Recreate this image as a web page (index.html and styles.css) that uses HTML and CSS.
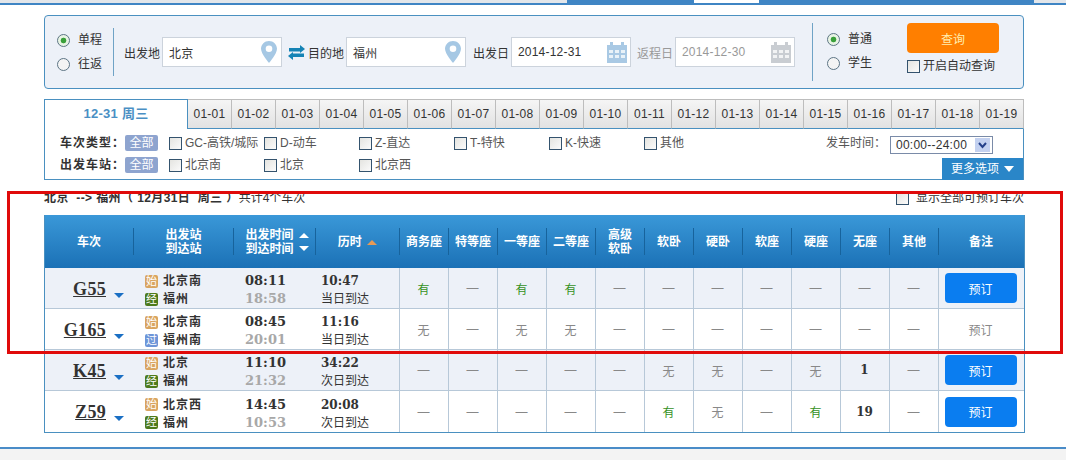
FILE: index.html
```html
<!DOCTYPE html>
<html lang="zh-CN">
<head>
    <meta charset="UTF-8" />
    <title>车票预订</title>
    <link rel="stylesheet" href="styles.css">
</head>
<body>
    <svg class="defs" width="0" height="0">
        <symbol id="pin" viewBox="0 0 16 22">
            <path d="M8 0C3.6 0 0 3.5 0 7.8 0 13 8 22 8 22s8-9 8-14.2C16 3.5 12.4 0 8 0zm0 11a3.3 3.3 0 1 1 0-6.6A3.3 3.3 0 0 1 8 11z" fill="#a6c8e4"/>
        </symbol>
        <symbol id="cal" viewBox="0 0 20 21">
            <path d="M0 3h3V0h3v3h8V0h3v3h3v18H0z" fill="currentColor"/>
            <path d="M2 8h4v3H2zm6 0h4v3H8zm6 0h4v3h-4zM2 13h4v3H2zm6 0h4v3H8zm6 0h4v3h-4z" fill="#fff" opacity=".75"/>
        </symbol>
    </svg>

    <div class="topbar">
        <div class="top-left"></div>
        <div class="top-nav"><div class="top-current"></div></div>
    </div>

    <div class="wrap">
        <form class="query">
            <div class="radios first">
                <label class="radio"><input type="radio" name="way" checked>单程</label>
                <label class="radio"><input type="radio" name="way">往返</label>
            </div>
            <span class="lbl">出发地</span>
            <div class="field"><input type="text" value="北京"><svg class="pin"><use href="#pin"/></svg></div>
            <svg class="swap" viewBox="0 0 17 15">
                <path d="M1 6.5V3h11V0l5 4-5 4V6.5zM16 8.5V12H5v3l-5-4 5-4v1.5z" fill="#1583b5"/>
            </svg>
            <span class="lbl">目的地</span>
            <div class="field"><input type="text" value="福州"><svg class="pin"><use href="#pin"/></svg></div>
            <span class="lbl lbl-go">出发日</span>
            <div class="field"><input type="text" value="2014-12-31"><svg class="cal"><use href="#cal"/></svg></div>
            <span class="lbl lbl-back">返程日</span>
            <div class="field off"><input type="text" value="2014-12-30"><svg class="cal"><use href="#cal"/></svg></div>
            <div class="radios second">
                <label class="radio"><input type="radio" name="who" checked>普通</label>
                <label class="radio"><input type="radio" name="who">学生</label>
            </div>
            <div class="actions">
                <button type="button" class="btn-query">查询</button>
                <label class="check"><input type="checkbox">开启自动查询</label>
            </div>
        </form>

        <ul class="tabs">
            <li class="active">12-31 周三</li>
            <li>01-01</li><li>01-02</li><li>01-03</li><li>01-04</li><li>01-05</li>
            <li>01-06</li><li>01-07</li><li>01-08</li><li>01-09</li><li>01-10</li>
            <li>01-11</li><li>01-12</li><li>01-13</li><li>01-14</li><li>01-15</li>
            <li>01-16</li><li>01-17</li><li>01-18</li><li>01-19</li>
        </ul>

        <div class="filter">
            <div class="filter-row">
                <b class="filter-name">车次类型：</b>
                <span class="all">全部</span>
                <label class="check item"><input type="checkbox">GC-高铁/城际</label>
                <label class="check item"><input type="checkbox">D-动车</label>
                <label class="check item"><input type="checkbox">Z-直达</label>
                <label class="check item"><input type="checkbox">T-特快</label>
                <label class="check item"><input type="checkbox">K-快速</label>
                <label class="check item"><input type="checkbox">其他</label>
                <span class="time-name">发车时间：</span>
                <div class="time-select">00:00--24:00<span class="time-arrow"><svg width="9" height="7" viewBox="0 0 9 7"><path d="M1 1l3.5 4L8 1" fill="none" stroke="#24408a" stroke-width="2"/></svg></span></div>
            </div>
            <div class="filter-row">
                <b class="filter-name">出发车站：</b>
                <span class="all">全部</span>
                <label class="check item"><input type="checkbox">北京南</label>
                <label class="check item"><input type="checkbox">北京</label>
                <label class="check item"><input type="checkbox">北京西</label>
                <div class="more">更多选项<i class="more-arrow"></i></div>
            </div>
        </div>

        <div class="summary">
            <div><b>北京&nbsp; --&gt; 福州（ 12月31日&nbsp; 周三 ）</b>共计4个车次</div>
            <label class="check"><input type="checkbox">显示全部可预订车次</label>
        </div>

        <table class="trains">
            <colgroup>
                <col class="c-no"><col class="c-st"><col class="c-tm"><col class="c-du">
                <col class="c-s"><col class="c-s"><col class="c-s"><col class="c-s">
                <col class="c-s"><col class="c-s"><col class="c-s"><col class="c-s">
                <col class="c-s"><col class="c-s"><col class="c-s"><col class="c-last">
            </colgroup>
            <thead>
                <tr>
                    <th>车次</th>
                    <th>出发站<br>到达站</th>
                    <th><div class="sort-wrap"><span>出发时间<br>到达时间</span><span class="sort-icons"><i class="up"></i><i class="down"></i></span></div></th>
                    <th>历时 <i class="up hot"></i></th>
                    <th>商务座</th><th>特等座</th><th>一等座</th><th>二等座</th>
                    <th>高级<br>软卧</th><th>软卧</th><th>硬卧</th><th>软座</th>
                    <th>硬座</th><th>无座</th><th>其他</th><th class="end">备注</th>
                </tr>
            </thead>
            <tbody>
                <tr>
                    <td class="no"><a>G55</a><i class="drop"></i></td>
                    <td class="st"><div><em class="tag start">始</em>北京南</div><div><em class="tag pass">经</em>福州</div></td>
                    <td class="tm"><b>08:11</b><b class="arr">18:58</b></td>
                    <td class="du"><b>10:47</b><span>当日到达</span></td>
                    <td class="yes">有</td><td>—</td><td class="yes">有</td><td class="yes">有</td>
                    <td>—</td><td>—</td><td>—</td><td>—</td><td>—</td><td>—</td><td>—</td>
                    <td class="end"><button type="button" class="book">预订</button></td>
                </tr>
                <tr>
                    <td class="no"><a>G165</a><i class="drop"></i></td>
                    <td class="st"><div><em class="tag start">始</em>北京南</div><div><em class="tag via">过</em>福州南</div></td>
                    <td class="tm"><b>08:45</b><b class="arr">20:01</b></td>
                    <td class="du"><b>11:16</b><span>当日到达</span></td>
                    <td>无</td><td>—</td><td>无</td><td>无</td>
                    <td>—</td><td>—</td><td>—</td><td>—</td><td>—</td><td>—</td><td>—</td>
                    <td class="end">预订</td>
                </tr>
                <tr>
                    <td class="no"><a>K45</a><i class="drop"></i></td>
                    <td class="st"><div><em class="tag start">始</em>北京</div><div><em class="tag pass">经</em>福州</div></td>
                    <td class="tm"><b>11:10</b><b class="arr">21:32</b></td>
                    <td class="du"><b>34:22</b><span>次日到达</span></td>
                    <td>—</td><td>—</td><td>—</td><td>—</td><td>—</td>
                    <td>无</td><td>无</td><td>—</td><td>无</td><td class="num">1</td><td>—</td>
                    <td class="end"><button type="button" class="book">预订</button></td>
                </tr>
                <tr>
                    <td class="no"><a>Z59</a><i class="drop"></i></td>
                    <td class="st"><div><em class="tag start">始</em>北京西</div><div><em class="tag pass">经</em>福州</div></td>
                    <td class="tm"><b>14:45</b><b class="arr">10:53</b></td>
                    <td class="du"><b>20:08</b><span>次日到达</span></td>
                    <td>—</td><td>—</td><td>—</td><td>—</td><td>—</td>
                    <td class="yes">有</td><td>无</td><td>—</td><td class="yes">有</td><td class="num">19</td><td>—</td>
                    <td class="end"><button type="button" class="book">预订</button></td>
                </tr>
            </tbody>
        </table>
    </div>

    <div class="footer"></div>

    <div class="highlight"></div>
</body>
</html>
```

FILE: styles.css
```css
* {
    box-sizing: border-box;
}
html, body {
    height: 460px;
    overflow: hidden;
}
body {
    margin: 0;
    background: #fff;
    color: #333;
    font-family: "Liberation Sans", "Noto Sans CJK SC", sans-serif;
    font-size: 12px;
}
.defs {
    position: absolute;
}
input[type="radio"],
input[type="checkbox"] {
    appearance: none;
    margin: 0;
    flex: none;
}

/* top strip */
.topbar {
    display: flex;
    height: 5px;
    border-bottom: 2px solid #3f85c4;
    background: #e3e6ea;
}
.top-left {
    width: 567px;
}
.top-nav {
    width: 467px;
    background: #3f85c4;
    padding-left: 127px;
}
.top-current {
    width: 65px;
    height: 3px;
    background: #fff;
}

.wrap {
    width: 980px;
    margin-left: 44px;
}

/* query box */
.query {
    display: flex;
    align-items: center;
    height: 74px;
    margin-top: 10px;
    border: 1px solid #4a90c0;
    border-radius: 4px;
    background: #edf1f8;
}
.radios {
    display: flex;
    flex-direction: column;
    justify-content: center;
    gap: 7px;
}
.radios.first {
    width: 69px;
    height: 48px;
    margin-right: 10px;
    padding-left: 12px;
    border-right: 1px solid #6fa3c6;
}
.radios.second {
    width: 95px;
    height: 58px;
    margin-left: 17px;
    padding: 0 0 2px 14px;
    border-left: 1px solid #6fa3c6;
}
.radio {
    display: flex;
    align-items: center;
    gap: 8px;
    height: 17px;
    line-height: 15px;
}
.radio input {
    width: 13px;
    height: 13px;
    border: 1px solid #5d7585;
    border-radius: 50%;
    background: #f4f4f4;
}
.radio input:checked {
    background: radial-gradient(circle, #3aa03a 0 2.5px, #e8f4e4 3.2px);
}
.lbl {
    width: 38px;
    flex: none;
}
.lbl.lbl-go {
    margin-left: 7px;
}
.lbl.lbl-back {
    margin-left: 6px;
    color: #999;
}
.field {
    display: flex;
    align-items: center;
    justify-content: space-between;
    width: 120px;
    height: 30px;
    flex: none;
    padding-right: 4px;
    border: 1px solid #ccd3dc;
    background: #fff;
    color: #a9c9e4;
}
.field input {
    width: 88px;
    min-width: 0;
    border: 0;
    outline: 0;
    padding: 0 0 0 6px;
    background: none;
    color: #333;
    font: inherit;
    letter-spacing: 0.2px;
}
.field.off {
    color: #c9cdd2;
}
.field.off input {
    color: #999;
}
.pin {
    width: 16px;
    height: 22px;
}
.cal {
    width: 20px;
    height: 21px;
    margin-right: -1px;
}
.swap {
    width: 17px;
    height: 15px;
    flex: none;
    margin: 0 3px 0 6px;
}
.actions {
    display: flex;
    flex-direction: column;
    align-self: flex-start;
    margin-top: 7px;
    gap: 7px;
}
.btn-query {
    width: 92px;
    height: 30px;
    border: 0;
    border-radius: 4px;
    background: #ff7f00;
    color: #ffeeb0;
    font: inherit;
}
.check {
    display: flex;
    align-items: center;
    gap: 3px;
    height: 13px;
    line-height: 13px;
}
.check input {
    width: 13px;
    height: 13px;
    border: 1px solid #34536e;
    background: linear-gradient(135deg, #e4e4e0, #fbfbfb);
}

/* date tabs */
.tabs {
    display: flex;
    height: 30px;
    margin: 10px 0 0;
    padding: 0;
    list-style: none;
}
.tabs li {
    width: 44px;
    height: 30px;
    border: 1px solid #bdbdbd;
    border-left: 0;
    border-bottom: 1px solid #4a90c0;
    background: linear-gradient(#f5f5f5, #e2e2e2);
    text-align: center;
    line-height: 28px;
    letter-spacing: 0.25px;
}
.tabs li.active {
    width: 144px;
    border: 1px solid #4a90c0;
    border-bottom: 0;
    background: #fff;
    color: #4a8fc4;
    font-size: 13px;
    font-weight: bold;
    line-height: 27px;
}

/* filters */
.filter {
    height: 51px;
    padding-top: 3px;
    border: 1px solid #4a90c0;
    border-top: 0;
}
.filter-row {
    display: flex;
    align-items: flex-start;
    height: 22px;
    padding-left: 15px;
    line-height: 22px;
    color: #555;
}
.filter-row + .filter-row {
    height: 25px;
}
.filter-name {
    width: 65px;
    color: #333;
    letter-spacing: 1px;
    white-space: nowrap;
}
.all {
    width: 33px;
    height: 16px;
    margin: 3px 11px 0 0;
    border-radius: 2px;
    background: #8ea4cf;
    color: #fff;
    text-align: center;
    line-height: 16px;
}
.item {
    width: 95px;
    height: 22px;
}
.time-name {
    margin-left: auto;
    margin-right: 4px;
}
.time-select {
    display: flex;
    align-items: center;
    justify-content: space-between;
    width: 103px;
    height: 18px;
    margin: 4px 30px 0 0;
    padding: 0 2px 0 5px;
    border: 1px solid #7a8ba8;
    background: #fff;
    color: #333;
    line-height: 16px;
    letter-spacing: 0.25px;
}
.time-arrow {
    display: flex;
    align-items: center;
    justify-content: center;
    width: 15px;
    height: 14px;
    background: #c3d1f0;
}
.more {
    display: flex;
    align-items: center;
    justify-content: center;
    gap: 5px;
    width: 81px;
    height: 22px;
    margin-left: auto;
    margin-top: 4px;
    background: #2a86c8;
    color: #fff;
}
.more-arrow {
    border: 5px solid transparent;
    border-top: 6px solid #fff;
    border-bottom: 0;
}

/* result summary */
.summary {
    display: flex;
    justify-content: space-between;
    align-items: center;
    height: 16px;
    margin-top: 10px;
    line-height: 16px;
}
.summary b {
    letter-spacing: 0.4px;
}
.summary .check {
    gap: 7px;
}

/* train table */
.trains {
    width: 980px;
    margin-top: 9px;
    table-layout: fixed;
    border-collapse: separate;
    border-spacing: 0;
    border: 1px solid #4a90c0;
    border-top: 0;
}
.c-no { width: 89px; }
.c-st { width: 100px; }
.c-tm { width: 82px; }
.c-du { width: 84px; }
.c-s { width: 49px; }
.c-last { width: 85px; }
.trains thead tr {
    background: linear-gradient(#3a98d8, #1b71b6);
}
.trains th {
    height: 53px;
    padding: 0 1px 0 0;
    color: #fff;
    line-height: 14px;
    background: linear-gradient(#17639c, #17639c) right center / 1px 27px no-repeat;
}
.trains th.end {
    background: none;
}
.sort-wrap {
    display: flex;
    align-items: center;
    justify-content: center;
    gap: 5px;
    padding-left: 5px;
}
.sort-icons {
    display: flex;
    flex-direction: column;
    gap: 8px;
}
.up, .down {
    display: inline-block;
    border: 5px solid transparent;
}
.up {
    border-top: 0;
    border-bottom: 5px solid #fff;
}
.down {
    border-bottom: 0;
    border-top: 5px solid #fff;
}
.up.hot {
    margin-left: 2px;
    border-bottom-color: #e79a55;
    vertical-align: 1px;
}
.trains td {
    height: 41px;
    padding: 0 1px 0 0;
    border-right: 1px solid #b7c8d8;
    border-bottom: 1px solid #b7c8d8;
    color: #888;
    text-align: center;
}
.trains tbody tr:nth-child(odd) td {
    background: #edf1f8;
}
.trains tbody tr:last-child td {
    border-bottom: 0;
}
.trains td.end {
    border-right: 0;
    padding-right: 2px;
}
.trains td.no, .trains td.st, .trains td.tm {
    border-right: 0;
}
.trains td.yes {
    color: #35911d;
}
.trains td.num {
    color: #333;
    font-family: "DejaVu Serif", serif;
    font-size: 12px;
    font-weight: bold;
}
.trains td.no {
    padding-top: 2px;
    text-align: left;
}
.no a {
    display: inline-block;
    width: 61px;
    color: #333;
    font-family: "Liberation Serif", serif;
    font-size: 18px;
    font-weight: bold;
    letter-spacing: 0.3px;
    text-align: right;
    text-decoration: underline;
}
.drop {
    display: inline-block;
    margin-left: 8px;
    border: 5px solid transparent;
    border-top: 5px solid #1a6fc4;
    border-bottom: 0;
    vertical-align: -3px;
}
.trains td.st {
    padding: 4px 0 0 11px;
    color: #333;
    font-weight: bold;
    letter-spacing: 1px;
    text-align: left;
    line-height: 18px;
}
.st div {
    display: flex;
    align-items: center;
}
.tag {
    width: 13px;
    height: 13px;
    margin-right: 5px;
    border-radius: 2px;
    color: #fff;
    font-size: 11px;
    font-style: normal;
    font-weight: normal;
    letter-spacing: 0;
    line-height: 13px;
    text-align: center;
}
.tag.start { background: #d9a45f; }
.tag.pass { background: #4d7a1c; }
.tag.via { background: #6d95d8; }
.trains td.tm, .trains td.du {
    padding-top: 4px;
    text-align: left;
}
.trains td.tm {
    padding-left: 11px;
}
.tm b, .du b, .du span {
    display: block;
    line-height: 18px;
    color: #333;
}
.tm b {
    font-family: "DejaVu Serif", serif;
    font-size: 13px;
}
.tm b.arr {
    color: #a8a8a8;
}
.trains td.du {
    padding-left: 5px;
}
.du b {
    font-family: "DejaVu Serif", serif;
    font-size: 12px;
}
.book {
    width: 72px;
    height: 30px;
    border: 0;
    border-radius: 4px;
    background: #0a7df0;
    color: #fff;
    font: inherit;
}

.footer {
    height: 14px;
    margin-top: 14px;
    border-top: 2px solid #4a8cc8;
    background: #f3f3f3;
}

/* red annotation drawn over the page */
.highlight {
    position: absolute;
    left: 7px;
    top: 191px;
    width: 1056px;
    height: 163px;
    border: 3px solid #e00a0a;
}
```
